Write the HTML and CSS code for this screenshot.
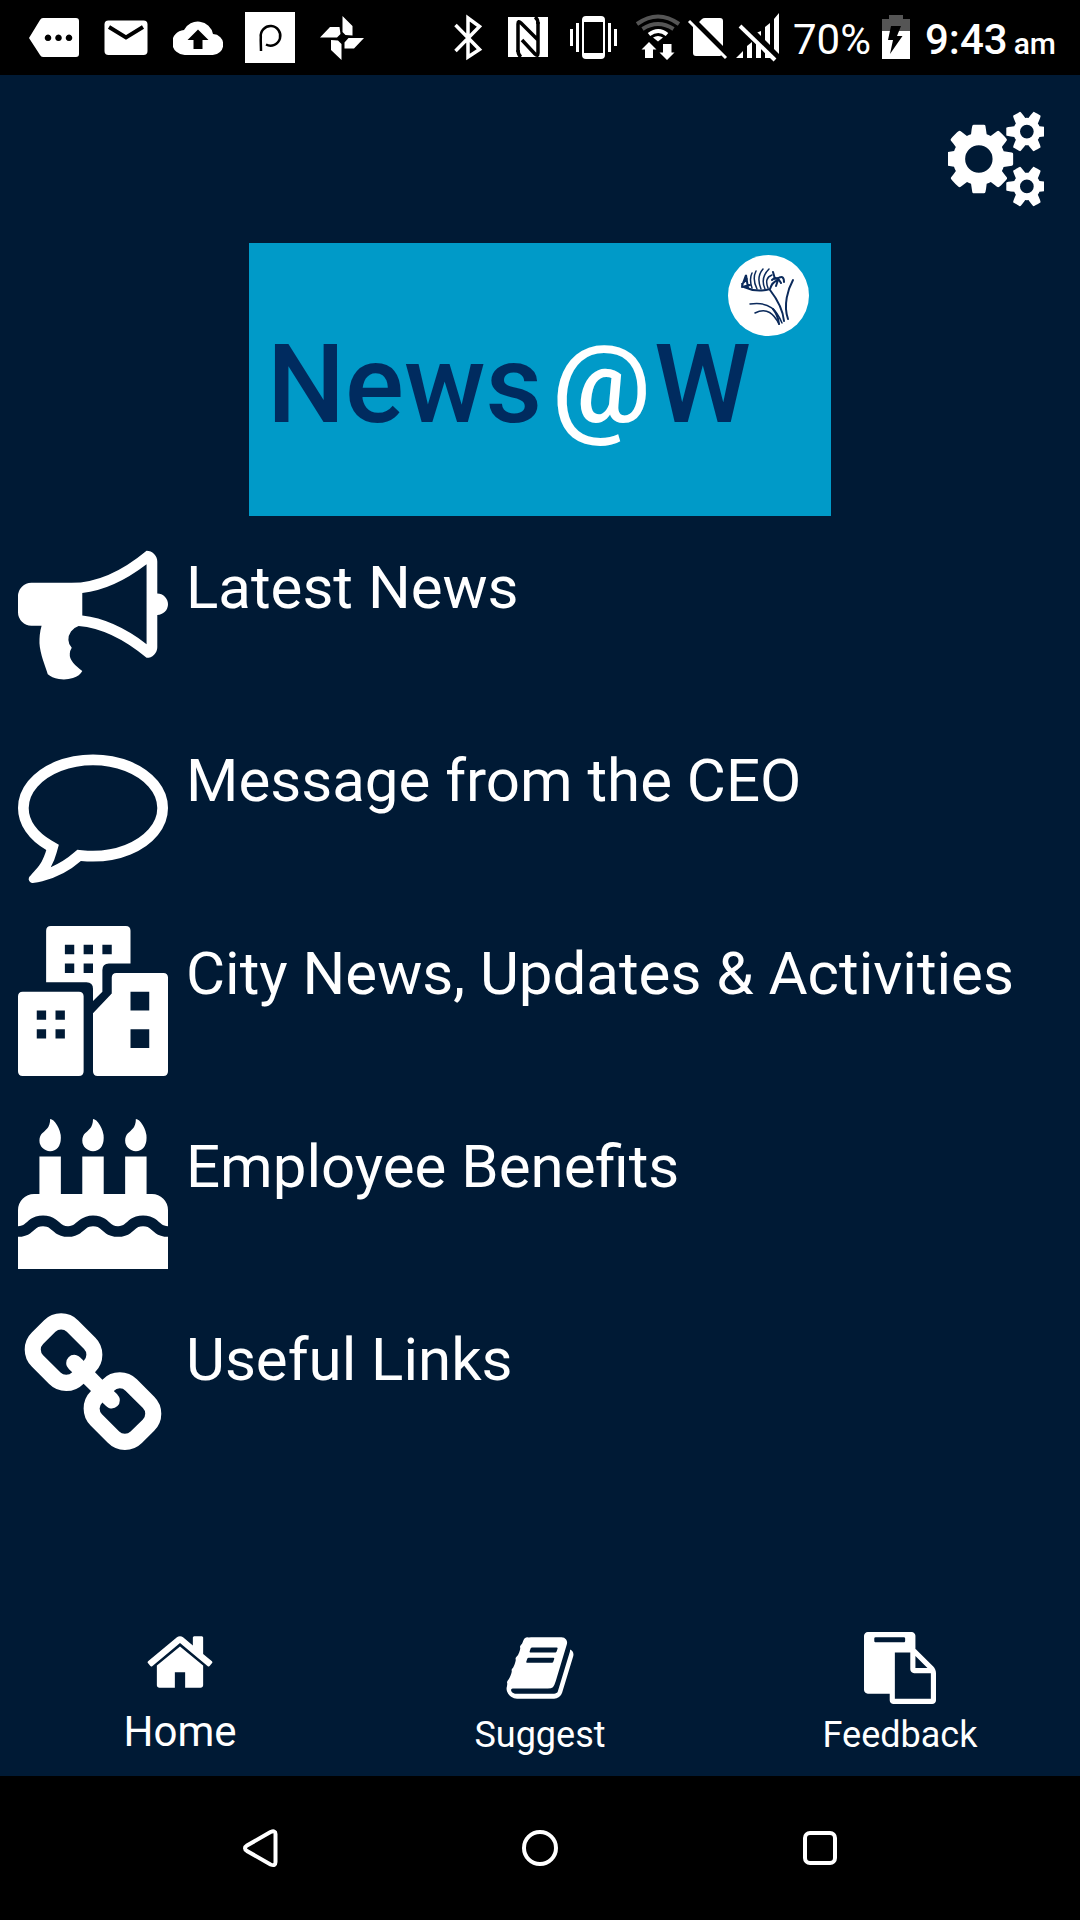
FILE: index.html
```html
<!DOCTYPE html>
<html lang="en">
<head>
<meta charset="utf-8">
<meta name="viewport" content="width=device-width, initial-scale=1">
<title>News@W</title>
<link rel="stylesheet" href="styles.css">
</head>
<body>
<div class="status-bar">
  <div class="notifications">
    <svg width="50" height="75" viewBox="29 0 50 75" aria-hidden="true"><path fill-rule="evenodd" d="M43 18h33q3 0 3 3v33q0 3-3 3H43q-2 0-3-2L29 38l11-18q1-2 3-2zM48 34.500a3.300 3.300 0 1 0 .01 0zM58.500 34.500a3.300 3.300 0 1 0 .01 0zM69 34.500a3.300 3.300 0 1 0 .01 0z"/></svg>
    <svg width="50" height="75" viewBox="101 0 50 75" aria-hidden="true"><rect x="104.500" y="20.500" width="43" height="34.500" rx="4"/><path class="ink-line" d="M109 27l17 10.500L143 27" stroke-width="4"/></svg>
    <svg width="50" height="75" viewBox="173 0 50 75" aria-hidden="true"><path fill-rule="evenodd" d="M213 34A15.500 15.500 0 0 0 184 30A12.500 12.500 0 0 0 185.500 55H212.500A10.500 10.500 0 0 0 213 34zM198 29.500l10.500 10.500H202.500v9h-9v-9H187.500z"/></svg>
    <svg width="50" height="75" viewBox="245 0 50 75" aria-hidden="true"><path d="M245 12h50v51h-50z"/><path class="ink-line" d="M261 51c0-5-.5-10-.2-14A9.800 9.800 0 1 1 266 44.500" stroke-width="2.500"/></svg>
    <svg width="50" height="75" viewBox="317 0 50 75" aria-hidden="true"><path d="M342.500 16l10 10v9.500l-7-.5-3-3zM364 38l-10 10.500h-9.500v-6l4-4.500zM341.500 60l-10.500-10v-10l7 .5 3.500 3.500zM320 37.500L330 27h9.500l1 7-3.500 3.500z"/></svg>
  </div>
  <div class="device-state">
    <div class="radios">
      <svg width="60" height="75" viewBox="439 0 60 75" aria-hidden="true"><path class="line" d="M456.500 25l24 24.500L469 57V18l11.500 8.500L456.500 51" stroke-width="3.500"/></svg>
      <svg width="61" height="75" viewBox="499 0 61 75" aria-hidden="true"><path d="M509 17h40v40h-40z"/><path class="ink-line" d="M519 52V24q0-4 3-1l17 17M539 22v31q0 4-3 1L523 40" stroke-width="3.500"/><path class="ink-line" d="M519 50q0 5 3 7M539 24q0-5-3-7" stroke-width="3.500"/></svg>
      <svg width="70" height="75" viewBox="560 0 70 75" aria-hidden="true"><path fill-rule="evenodd" d="M587 16h15q4 0 4 4v35q0 4-4 4h-15q-4 0-4-4V20q0-4 4-4zM585 22v31h19V22zM571 29h3v17h-3zM577 23h3v29h-3zM609 23h3v29h-3zM615 29h3v17h-3z"/></svg>
      <svg width="54" height="75" viewBox="630 0 54 75" aria-hidden="true"><path class="dim-line" d="M638 24q21-15 42 0M643.500 29q15.500-10 31 0" stroke-width="4"/><path class="line" d="M650 34.500q9.500-7 18 0" stroke-width="4"/><path d="M654 37.500q5-3 10 0l-5 4zM650 42l7.500 7.500H654V58h-8v-8.500h-3.500zM664 44h8.500v8.500h3L668 60l-7.500-7.500h3.500z"/></svg>
      <svg width="48" height="75" viewBox="684 0 48 75" aria-hidden="true"><path d="M700 22l3-3q1-1 3-1h15q3 0 3 3v25zM694 26l29 29-2 1H697q-3 0-3-3z"/><path class="line" d="M690 21l37 37" stroke-width="3"/></svg>
      <svg width="52" height="75" viewBox="732 0 52 75" aria-hidden="true"><path d="M737 58l7-7v7zM748 46l5-4v16h-5zM757 33l5-2v27h-5zM766 27l5-4v35h-5zM775 19l5-6v43l-5-5z"/><path class="ink-line" d="M744 23l36 36" stroke-width="7"/><path class="line" d="M741 26l35 34" stroke-width="4"/></svg>
    </div>
    <span class="charge">70%</span>
    <svg width="34" height="75" viewBox="880 0 34 75" aria-hidden="true"><path class="dim" d="M888 15h14v4h7v13h-28V19h7z"/><path d="M881 31h28v28h-28z"/><path class="ink" d="M890 26h10l-4 10h5.500L889 54l3-14h-5z"/></svg>
    <time class="clock"><span>9:43</span> <small>am</small></time>
  </div>
</div>

<main class="app">
  <header class="toolbar">
    <button class="icon-button" type="button" aria-label="Settings">
      <svg width="96" height="96" viewBox="0 0 1792 1792" aria-hidden="true"><path d="M832 896q0-106-75-181t-181-75-181 75-75 181 75 181 181 75 181-75 75-181zm768 512q0-52-38-90t-90-38-90 38-38 90q0 53 37.500 90.500t90.500 37.500 90.500-37.500 37.500-90.500zm0-1024q0-52-38-90t-90-38-90 38-38 90q0 53 37.500 90.500t90.500 37.500 90.500-37.500 37.500-90.500zm-384 421v185q0 10-7 19.500t-16 10.500l-155 24q-11 35-32 76 34 48 90 115 7 11 7 20 0 12-7 19-23 30-82.500 89.500t-78.500 59.500q-11 0-21-7l-115-90q-37 19-77 31-11 108-23 155-7 24-30 24h-186q-11 0-20-7.500t-10-17.500l-23-153q-34-10-75-31l-118 89q-7 7-20 7-11 0-21-8-144-133-144-160 0-9 7-19 10-14 41-53t47-61q-23-44-35-82l-152-24q-10-1-17-9.500t-7-19.500v-185q0-10 7-19.500t16-10.500l155-24q11-35 32-76-34-48-90-115-7-11-7-20 0-12 7-20 22-30 82-89t79-59q11 0 21 7l115 90q34-18 77-32 11-108 23-154 7-24 30-24h186q11 0 20 7.500t10 17.500l23 153q34 10 75 31l118-89q8-7 20-7 11 0 21 8 144 133 144 160 0 8-7 19-12 16-42 54t-45 60q23 48 34 82l152 23q10 2 17 10.500t7 19.500zm640 533v140q0 16-149 31-12 27-30 52 51 113 51 138 0 4-4 7-122 71-124 71-8 0-46-47t-52-68q-20 2-30 2t-30-2q-14 21-52 68t-46 47q-2 0-124-71-4-3-4-7 0-25 51-138-18-25-30-52-149-15-149-31v-140q0-16 149-31 13-29 30-52-51-113-51-138 0-4 4-7 4-2 35-20t59-34 30-16q8 0 46 46.500t52 67.500q20-2 30-2t30 2q51-71 92-112l6-2q4 0 124 70 4 3 4 7 0 25-51 138 17 23 30 52 149 15 149 31zm0-1024v140q0 16-149 31-12 27-30 52 51 113 51 138 0 4-4 7-122 71-124 71-8 0-46-47t-52-68q-20 2-30 2t-30-2q-14 21-52 68t-46 47q-2 0-124-71-4-3-4-7 0-25 51-138-18-25-30-52-149-15-149-31v-140q0-16 149-31 13-29 30-52-51-113-51-138 0-4 4-7 4-2 35-20t59-34 30-16q8 0 46 46.500t52 67.500q20-2 30-2t30 2q51-71 92-112l6-2q4 0 124 70 4 3 4 7 0 25-51 138 17 23 30 52 149 15 149 31z"/></svg>
    </button>
  </header>

  <h1 class="banner">
    <span>News</span><span class="banner-at">@</span><span>W</span>
    <svg class="crest" width="81" height="81" viewBox="0 0 81 81" aria-hidden="true">
      <circle cx="40.500" cy="40.500" r="40.500"/>
      <g class="flower">
        <path d="M42 35C49 44 55 56 56 66M51 69Q50 60 45 54M60 64C55 50 60 34 65 25" stroke-width="2"/>
        <path d="M54 68C49 56 42 46 22 49M51 69C46 59 39 52 27 58" stroke-width="1.500"/>
        <path d="M16 32Q29 38 42 34M42 34Q44 27 50 25M44 25Q49 20 53 28M47 24L45 17M49 24Q56 19 56 27M50 25L48 31" stroke-width="2"/>
        <path d="M24 33Q21 24 24 18M29 34Q24 24 28 16M33 34Q28 22 35 14M37 34Q32 23 41 14M40 33Q36 23 44 20" stroke-width="1.500"/>
        <path d="M14 31L18 20 20 33M14 29L19 24M14 32L22 30" stroke-width="2"/>
      </g>
    </svg>
  </h1>

  <nav aria-label="Sections">
    <ul class="menu">
      <li><a class="menu-item" href="#latest">
        <svg width="150" height="150" viewBox="0 0 1792 1792" aria-hidden="true"><path d="M1664 640q53 0 90.500 37.500t37.500 90.500-37.500 90.500-90.500 37.500v384q0 52-38 90t-90 38q-417-347-812-380-58 19-91 66t-31 100.500 40 92.500q-20 33-23 65.500t6 58 33.500 55 48 50 61.500 50.500q-29 58-111.500 83t-168.500 11.500-132-55.500q-7-23-29.500-87.500t-32-94.500-23-89-15-101 3.500-98.500 22-110.500h-122q-66 0-113-47t-47-113v-192q0-66 47-113t113-47h480q435 0 896-384 52 0 90 38t38 90v384zm-128 604v-954q-394 302-768 343v270q377 42 768 341z"/></svg>
        <span>Latest News</span></a></li>
      <li><a class="menu-item" href="#ceo">
        <svg width="150" height="150" viewBox="0 0 1792 1792" aria-hidden="true"><path d="M896 384q-204 0-381.500 69.500t-282 187.500-104.500 255q0 112 71.500 213.500t201.500 175.500l87 50-27 96q-24 91-70 172 152-63 275-171l43-38 57 6q69 8 130 8 204 0 381.500-69.500t282-187.500 104.500-255-104.500-255-282-187.500-381.500-69.500zm896 512q0 174-120 321.500t-326 233-450 85.500q-70 0-145-8-198 175-460 242-49 14-114 22h-5q-15 0-27-10.500t-16-27.500v-1q-3-4-.5-12t2-10 4.500-9.500l6-9 7-8.500 8-9q7-8 31-34.500t34.500-38 31-39.500 32.500-51 27-59 26-76q-157-89-247.500-220t-90.500-281q0-174 120-321.500t326-233 450-85.500 450 85.500 326 233 120 321.500z"/></svg>
        <span>Message from the CEO</span></a></li>
      <li><a class="menu-item" href="#city">
        <svg width="150" height="150" viewBox="0 0 16 16" aria-hidden="true"><path fill-rule="evenodd" d="M3.500 0h8q.5 0 .5.5V4H9.700Q9 4 9 4.700V7L8 8V6.700Q8 6 7.300 6H3V.5Q3 0 3.500 0zM5 2v1h1V2zM7 2v1h1V2zM9 2v1h1V2zM5 4v1h1V4zM7 4v1h1V4zM.5 7h6q.5 0 .5.5v8q0 .5-.5.5h-6Q0 16 0 15.500v-8Q0 7 .5 7zM2 9v1h1V9zM4 9v1h1V9zM2 11v1h1v-1zM4 11v1h1v-1zM10.500 5h5q.5 0 .5.500v10q0 .5-.5.500h-7Q8 16 8 15.500V9.300l2-2.100V5.500Q10 5 10.500 5zM12 7v2h2V7zM12 11v2h2v-2z"/></svg>
        <span>City News, Updates &amp; Activities</span></a></li>
      <li><a class="menu-item" href="#benefits">
        <svg width="150" height="150" viewBox="0 0 1792 1792" aria-hidden="true"><path d="M1792 1408v384h-1792v-384q45 0 85-14t59-27.500 47-37.500q30-27 51.500-38t56.500-11q24 0 44 7t31 15 33 27q29 25 47 38t58 27 86 14q45 0 85-14.500t58-27 48-37.500q21-19 32.500-27t31-15 43.500-7q35 0 56.500 11t51.500 38q28 24 47 37.500t59 27.500 85 14 85-14 59-27.500 47-37.500q30-27 51.500-38t56.500-11q34 0 55.500 11t51.500 38q28 24 47 37.500t59 27.500 85 14zm0-320v192q-24 0-44-7t-31-15-33-27q-29-25-47-38t-58-27-85-14q-46 0-86 14t-58 27-47 38q-22 19-33 27t-31 15-44 7q-35 0-56.500-11t-51.500-38q-29-25-47-38t-58-27-86-14q-45 0-85 14.500t-58 27-48 37.500q-21 19-32.500 27t-31 15-43.500 7q-35 0-56.500-11t-51.500-38q-28-24-47-37.500t-59-27.500-85-14q-46 0-86 14t-58 27-47 38q-22 19-33 27t-31 15-44 7v-192q0-80 56-136t136-56h64v-448h256v448h256v-448h256v448h256v-448h256v448h64q80 0 136 56t56 136zm-1280-864q0 77-36 118.500t-92 41.500q-53 0-90.500-37.500t-37.500-90.500q0-29 9.500-51t23.500-34 31-28 31-31.500 23.500-44.500 9.500-67q38 0 83 74t45 150zm512 0q0 77-36 118.500t-92 41.500q-53 0-90.500-37.500t-37.500-90.500q0-29 9.500-51t23.500-34 31-28 31-31.500 23.500-44.500 9.500-67q38 0 83 74t45 150zm512 0q0 77-36 118.500t-92 41.500q-53 0-90.500-37.500t-37.500-90.500q0-29 9.500-51t23.500-34 31-28 31-31.500 23.500-44.500 9.500-67q38 0 83 74t45 150z"/></svg>
        <span>Employee Benefits</span></a></li>
      <li><a class="menu-item" href="#links">
        <svg width="150" height="150" viewBox="0 0 1792 1792" aria-hidden="true"><path d="M1520 1216q0-40-28-68l-208-208q-28-28-68-28-42 0-72 32 3 3 19 18.500t21.500 21.500 15 19 13 25.500 3.500 27.500q0 40-28 68t-68 28q-15 0-27.500-3.500t-25.500-13-19-15-21.500-21.500-18.500-19q-33 31-33 73 0 40 28 68l206 207q27 27 68 27 40 0 68-26l147-146q28-28 28-67zm-703-705q0-40-28-68l-206-207q-28-28-68-28-39 0-68 27l-147 146q-28 28-28 67 0 40 28 68l208 208q27 27 68 27 42 0 72-31-3-3-19-18.500t-21.500-21.500-15-19-13-25.500-3.500-27.500q0-40 28-68t68-28q15 0 27.500 3.500t25.500 13 19 15 21.500 21.500 18.500 19q33-31 33-73zm895 705q0 120-85 203l-147 146q-83 83-203 83-121 0-204-85l-206-207q-83-83-83-203 0-123 88-209l-88-88q-86 88-208 88-120 0-204-84l-208-208q-84-84-84-204t85-203l147-146q83-83 203-83 121 0 204 85l206 207q83 83 83 203 0 123-88 209l88 88q86-88 208-88 120 0 204 84l208 208q84 84 84 204z"/></svg>
        <span>Useful Links</span></a></li>
    </ul>
  </nav>

  <nav class="tabs" aria-label="Main">
    <a class="tab tab-current" href="#home" aria-current="page">
      <svg width="72" height="72" viewBox="0 0 1792 1792" aria-hidden="true"><path d="M1472 992v480q0 26-19 45t-45 19h-384v-384h-256v384h-384q-26 0-45-19t-19-45v-480q0-1 .5-3t.5-3l575-474 575 474q1 2 1 6zm223-69l-62 74q-8 9-21 11h-3q-13 0-21-7l-692-577-692 577q-12 8-24 7-13-2-21-11l-62-74q-8-10-7-23.500t11-21.500l719-599q32-26 76-26t76 26l244 204v-195q0-14 9-23t23-9h192q14 0 23 9t9 23v408l219 182q10 8 11 21.500t-7 23.500z"/></svg>
      <span>Home</span>
    </a>
    <a class="tab" href="#suggest">
      <svg width="72" height="72" viewBox="0 0 1792 1792" aria-hidden="true"><path d="M1703 478q40 57 18 129l-275 906q-19 64-76.500 107.500t-122.500 43.500h-923q-77 0-148.500-53.500t-99.500-131.500q-24-67-2-127 0-4 3-27t4-37q1-8-3-21.500t-3-19.500q2-11 8-21t16.500-23.500 16.500-23.500q23-38 45-91.500t30-91.500q3-10 .5-30t-.5-28q3-11 17-28t17-23q21-36 42-92t25-90q1-9-2.500-32t.5-28q4-13 22-30.500t22-22.500q19-26 42.500-84.500t27.500-96.500q1-8-3-25.500t-2-26.500q2-8 9-18t18-23 17-21q8-12 16.500-30.500t15-35 16-36 19.500-32 26.500-23.500 36-11.500 47.500 5.500l-1 3q38-9 51-9h761q74 0 114 56t18 130l-274 906q-36 119-71.500 153.500t-128.500 34.500h-869q-27 0-38 15-11 16-1 43 24 70 144 70h923q29 0 56-15.500t35-41.500l300-987q7-22 5-57 38 15 59 43zm-1064 2q-4 13 2 22.500t20 9.500h608q13 0 25.500-9.500t16.500-22.500l21-64q4-13-2-22.500t-20-9.500h-608q-13 0-25.500 9.500t-16.500 22.500zm-83 256q-4 13 2 22.500t20 9.500h608q13 0 25.500-9.500t16.500-22.500l21-64q4-13-2-22.500t-20-9.500h-608q-13 0-25.500 9.500t-16.500 22.500z"/></svg>
      <span>Suggest</span>
    </a>
    <a class="tab" href="#feedback">
      <svg width="72" height="72" viewBox="0 0 1792 1792" aria-hidden="true"><path d="M768 1664h896v-640h-416q-40 0-68-28t-28-68v-416h-384v1152zm256-1440v-64q0-13-9.500-22.500t-22.500-9.500h-704q-13 0-22.500 9.500t-9.500 22.500v64q0 13 9.500 22.500t22.500 9.500h704q13 0 22.500-9.500t9.500-22.500zm256 672h299l-299-299v299zm512 128v672q0 40-28 68t-68 28h-960q-40 0-68-28t-28-68v-160h-544q-40 0-68-28t-28-68v-1344q0-40 28-68t68-28h1088q40 0 68 28t28 68v328q21 13 36 28l408 408q28 28 48 76t20 88z"/></svg>
      <span>Feedback</span>
    </a>
  </nav>
</main>

<footer class="system-bar">
  <button class="icon-button" type="button" aria-label="Back"><svg width="40" height="40" viewBox="0 0 40 40" aria-hidden="true"><path class="line" d="M30.500 4L7 17.500q-4 2.500 0 5.500l23.500 13.500Q35.500 38.500 35.500 34V6q0-4-5-2z" stroke-width="4"/></svg></button>
  <button class="icon-button" type="button" aria-label="Home screen"><svg width="40" height="40" viewBox="0 0 40 40" aria-hidden="true"><circle class="line" cx="20" cy="20" r="16" stroke-width="4"/></svg></button>
  <button class="icon-button" type="button" aria-label="Recent apps"><svg width="40" height="40" viewBox="0 0 40 40" aria-hidden="true"><rect class="line" x="5" y="5" width="30" height="30" rx="5" stroke-width="4"/></svg></button>
</footer>
</body>
</html>
```
FILE: styles.css
```css
* {
  box-sizing: border-box;
}

body {
  margin: 0;
  min-height: 100vh;
  display: flex;
  flex-direction: column;
  background: #001a35;
  color: #fff;
  font-family: Roboto, "Liberation Sans", sans-serif;
}

svg {
  display: block;
  flex: none;
  fill: #fff;
}

.line,
.ink-line,
.dim-line {
  fill: none;
  stroke: #fff;
}

.ink-line {
  stroke: #000;
}

.dim-line {
  stroke: #555;
}

.ink {
  fill: #000;
}

.dim {
  fill: #555;
}

a {
  color: inherit;
  text-decoration: none;
}

.icon-button {
  padding: 0;
  border: 0;
  background: none;
}

/* Status bar */
.status-bar {
  height: 75px;
  padding: 0 24px 0 29px;
  display: flex;
  justify-content: space-between;
  background: #000;
  font-size: 42px;
  line-height: 80px;
}

.notifications {
  display: flex;
  gap: 22px;
}

.device-state {
  display: flex;
  gap: 10px;
}

.radios {
  display: flex;
}

.clock {
  display: flex;
  align-items: baseline;
  gap: 6px;
  font-weight: 500;
}

.clock small {
  font-size: 30px;
}

/* App */
.app {
  flex: 1;
  display: flex;
  flex-direction: column;
}

.toolbar {
  display: flex;
  justify-content: flex-end;
  padding: 36px;
}

.banner {
  position: relative;
  align-self: center;
  display: flex;
  align-items: center;
  width: 582px;
  height: 273px;
  margin: 0 0 24px;
  padding: 10px 0 0 18px;
  background: #009ac8;
  color: #002b5f;
  font-size: 110px;
  font-weight: 500;
  line-height: 128px;
}

.banner-at {
  margin: 0 3px 0 10px;
  color: #fff;
}

.crest {
  position: absolute;
  top: 12px;
  right: 22px;
}

.flower {
  fill: none;
  stroke: #0b2a5b;
  stroke-linecap: round;
}

.menu {
  list-style: none;
  margin: 0;
  padding: 0 18px;
  display: grid;
  gap: 43px;
}

.menu-item {
  display: flex;
  gap: 18px;
  font-size: 60px;
  line-height: 72px;
}

.menu-item span {
  padding-top: 12px;
}

/* Bottom tabs */
.tabs {
  margin-top: auto;
  padding-bottom: 20px;
  display: grid;
  grid-template-columns: repeat(3, 1fr);
  align-items: end;
}

.tab {
  display: flex;
  flex-direction: column;
  align-items: center;
  gap: 10px;
  font-size: 36px;
  line-height: 42px;
}

.tab-current {
  font-size: 42px;
  line-height: 48px;
}

/* System navigation */
.system-bar {
  height: 144px;
  padding: 0 120px;
  display: grid;
  grid-template-columns: repeat(3, 1fr);
  place-items: center;
  background: #000;
}
```
